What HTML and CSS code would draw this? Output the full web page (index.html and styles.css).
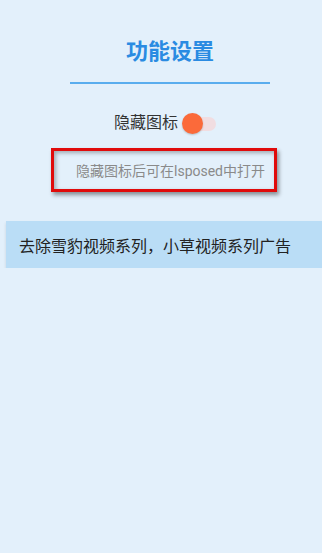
FILE: index.html
```html
<!DOCTYPE html>
<html lang="zh-CN">
<head>
<meta charset="utf-8">
<title>功能设置</title>
<link rel="stylesheet" href="styles.css">
</head>
<body>
<div class="page">
  <h1 class="title">功能设置</h1>
  <div class="divider"></div>
  <div class="toggle-row">
    <span class="label">隐藏图标</span>
    <span class="switch"><span class="track"></span><span class="thumb"></span></span>
  </div>
  <div class="hint">隐藏图标后可在lsposed中打开</div>
  <div class="band">去除雪豹视频系列，小草视频系列广告</div>
</div>
</body>
</html>
```
FILE: styles.css
```css
html, body {
  margin: 0;
  padding: 0;
  background: #E3F0FB;
  font-family: Roboto, "Noto Sans CJK SC", sans-serif;
}
.page {
  display: flex;
  flex-direction: column;
  align-items: center;
  padding-top: 37px;
}
.title {
  margin: 0 0 0 18px;
  font-size: 22px;
  font-weight: bold;
  line-height: 30px;
  color: #2A8BE2;
}
.divider {
  width: 200px;
  height: 2px;
  background: #5AADEE;
  margin-top: 15px;
  margin-left: 18px;
}
.toggle-row {
  display: flex;
  align-items: center;
  gap: 4px;
  height: 22px;
  margin-top: 28px;
  margin-left: 8px;
}
.label {
  font-size: 16px;
  color: #333;
  line-height: 22px;
}
.switch {
  position: relative;
  width: 34px;
  height: 21px;
  display: inline-block;
}
.track {
  position: absolute;
  left: 2px;
  right: 0;
  top: 4px;
  height: 14px;
  border-radius: 7px;
  background: #F1DDE1;
}
.thumb {
  position: absolute;
  left: 0;
  top: 0;
  width: 21px;
  height: 21px;
  border-radius: 50%;
  background: #FB6A3A;
  box-shadow: 0 1px 2px rgba(0,0,0,0.2);
}
.hint {
  box-sizing: border-box;
  width: 226px;
  height: 44px;
  margin-top: 14px;
  margin-left: 6px;
  border: 3px solid #E00B0B;
  padding-left: 22px;
  display: flex;
  align-items: center;
  font-size: 14px;
  color: #8A8A8A;
  box-shadow: 2px 3px 4px rgba(0,0,0,0.4), inset 2px 2px 4px rgba(0,0,0,0.3);
}
.band {
  align-self: stretch;
  margin-left: 6px;
  margin-top: 29px;
  height: 47px;
  box-sizing: border-box;
  padding-left: 13px;
  display: flex;
  align-items: center;
  background: #BADDF6;
  font-size: 16px;
  color: #222;
  box-shadow: 0 2px 3px rgba(0,0,0,0.12);
}
```
